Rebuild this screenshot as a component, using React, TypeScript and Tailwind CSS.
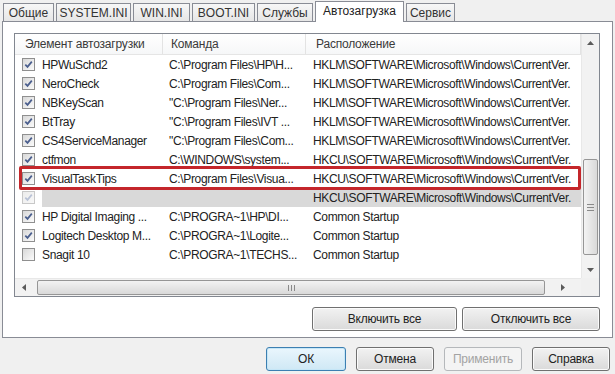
import React from "react";

const font = { fontFamily: '"Liberation Sans", Arial, sans-serif' };

type Row = { name: string; cmd: string; loc: string; on: boolean; ghost?: boolean };

const rows: Row[] = [
  { name: "HPWuSchd2", cmd: "C:\\Program Files\\HP\\H...", loc: "HKLM\\SOFTWARE\\Microsoft\\Windows\\CurrentVer.", on: true },
  { name: "NeroCheck", cmd: "C:\\Program Files\\Com...", loc: "HKLM\\SOFTWARE\\Microsoft\\Windows\\CurrentVer.", on: true },
  { name: "NBKeyScan", cmd: "\"C:\\Program Files\\Ner...", loc: "HKLM\\SOFTWARE\\Microsoft\\Windows\\CurrentVer.", on: true },
  { name: "BtTray", cmd: "\"C:\\Program Files\\IVT ...", loc: "HKLM\\SOFTWARE\\Microsoft\\Windows\\CurrentVer.", on: true },
  { name: "CS4ServiceManager", cmd: "\"C:\\Program Files\\Com...", loc: "HKLM\\SOFTWARE\\Microsoft\\Windows\\CurrentVer.", on: true },
  { name: "ctfmon", cmd: "C:\\WINDOWS\\system...", loc: "HKCU\\SOFTWARE\\Microsoft\\Windows\\CurrentVer.", on: true },
  { name: "VisualTaskTips", cmd: "C:\\Program Files\\Visua...", loc: "HKCU\\SOFTWARE\\Microsoft\\Windows\\CurrentVer.", on: true },
  { name: "", cmd: "", loc: "HKCU\\SOFTWARE\\Microsoft\\Windows\\CurrentVer.", on: true, ghost: true },
  { name: "HP Digital Imaging ...", cmd: "C:\\PROGRA~1\\HP\\DI...", loc: "Common Startup", on: true },
  { name: "Logitech Desktop M...", cmd: "C:\\PROGRA~1\\Logite...", loc: "Common Startup", on: true },
  { name: "Snagit 10", cmd: "C:\\PROGRA~1\\TECHS...", loc: "Common Startup", on: false },
];

const tabs = [
  { label: "Общие", w: "w-[51px]" },
  { label: "SYSTEM.INI", w: "w-[75px]" },
  { label: "WIN.INI", w: "w-[57px]" },
  { label: "BOOT.INI", w: "w-[63px]" },
  { label: "Службы", w: "w-[56px]" },
  { label: "Автозагрузка", w: "w-[89px]", active: true },
  { label: "Сервис", w: "w-[49px]" },
];

function Check({ on, faded }: { on: boolean; faded?: boolean }) {
  return (
    <span
      className={
        "w-[13px] h-[13px] shrink-0 border flex items-center justify-center bg-linear-to-br " +
        (faded ? "border-[#c8c8c8] from-[#ececec] to-[#f8f8f8]" : "border-[#8f8f8f] from-[#d8d8d8] to-[#fbfbfb]")
      }
    >
      {on && (
        <svg width="9" height="9" viewBox="0 0 9 9">
          <path
            d="M1.3 4.6 L3.5 6.9 L7.8 1.6"
            fill="none"
            stroke={faded ? "#b9c2d6" : "#4b5f8e"}
            strokeWidth="1.7"
          />
        </svg>
      )}
    </span>
  );
}

function Btn({ label, w, kind }: { label: string; w: string; kind?: "default" | "disabled" }) {
  const cls =
    kind === "default"
      ? "border-[#3c7fb1] bg-linear-to-b from-[#eaf6fd] to-[#cfe8f5] shadow-[inset_0_0_0_1px_#c5e6f7] text-[#222]"
      : kind === "disabled"
      ? "border-[#b5b8bb] bg-[#f4f4f4] text-[#a3a3a3]"
      : "border-[#707070] bg-linear-to-b from-[#f2f2f2] to-[#dadada] shadow-[inset_0_0_0_1px_#fbfbfb] text-[#222]";
  return (
    <div className={`${w} h-[24px] rounded-[3px] border flex items-center justify-center text-[12px] tracking-[-0.2px] ${cls}`}>
      {label}
    </div>
  );
}

function Arrow({ dir }: { dir: "up" | "down" | "left" | "right" }) {
  const pts = {
    up: "0,4 3.5,0 7,4",
    down: "0,0 3.5,4 7,0",
    left: "4,0 0,3.5 4,7",
    right: "0,0 4,3.5 0,7",
  }[dir];
  const vert = dir === "up" || dir === "down";
  return (
    <svg width={vert ? 7 : 4} height={vert ? 4 : 7} viewBox={vert ? "0 0 7 4" : "0 0 4 7"}>
      <polygon points={pts} fill="#5b5b5b" />
    </svg>
  );
}

export default function App() {
  return (
    <div className="w-[615px] h-[374px] bg-[#f0f0f0] overflow-hidden text-[#222]" style={font}>
      {/* tab strip */}
      <div className="flex items-end h-[21px] pl-[3px] gap-[2px]">
        {tabs.map((t) =>
          t.active ? (
            <div
              key={t.label}
              className={`${t.w} h-[21px] -mb-px relative z-10 border border-b-0 border-[#898c95] bg-white flex items-center justify-center text-[12px] pb-[2px]`}
            >
              {t.label}
            </div>
          ) : (
            <div
              key={t.label}
              className={`${t.w} h-[18px] border border-b-0 border-[#898c95] bg-linear-to-b from-[#f7f7f7] to-[#e6e6e6] flex items-center justify-center text-[12px] text-[#333]`}
            >
              {t.label}
            </div>
          )
        )}
      </div>

      {/* tab panel */}
      <div className="ml-[2px] w-[611px] h-[317px] border border-[#898c95] bg-white pl-[11px] pt-[11px]">
        <div className="relative w-[586px] h-[264px] border border-[#828790] bg-white flex flex-col">
          <div className="flex flex-1 min-h-0">
            <div className="flex-1 flex flex-col">
              {/* header */}
              <div className="flex h-[21px] border-b border-[#e5e5e5] bg-linear-to-b from-white to-[#f6f7f8] text-[12px] text-[#3a3a3a] tracking-[-0.2px]">
                <div className="w-[148px] pl-[10px] flex items-center border-r border-[#e3e3e3]">Элемент автозагрузки</div>
                <div className="w-[143px] pl-[8px] flex items-center border-r border-[#e3e3e3]">Команда</div>
                <div className="w-[275px] pl-[10px] flex items-center border-r border-[#e3e3e3]">Расположение</div>
              </div>
              {/* rows */}
              {rows.map((r, i) => (
                <div key={i} className="flex h-[19px] items-center text-[12px] tracking-[-0.35px] whitespace-nowrap">
                  <div className="w-[148px] pl-[7px] flex items-center gap-[7px] h-full">
                    <Check on={r.on} faded={r.ghost} />
                    <div className={"flex-1 h-full flex items-center " + (r.ghost ? "bg-[#d9d9d9]" : "")}>{r.name}</div>
                  </div>
                  <div className={"w-[143px] pl-[6px] h-full flex items-center " + (r.ghost ? "bg-[#d9d9d9]" : "")}>
                    {r.cmd}
                  </div>
                  <div className={"w-[275px] pl-[7px] h-full flex items-center overflow-hidden " + (r.ghost ? "bg-[#d9d9d9]" : "")}>
                    {r.loc}
                  </div>
                </div>
              ))}
            </div>
            {/* vertical scrollbar */}
            <div className="w-[18px] bg-[#f2f2f2] border-l border-[#e8e8e8] flex flex-col items-center">
              <div className="h-[17px] flex items-center justify-center">
                <Arrow dir="up" />
              </div>
              <div className="flex-1 w-full flex flex-col">
                <div className="h-[108px]" />
                <div className="mx-[1px] h-[96px] rounded-[2px] border border-[#969696] bg-linear-to-r from-[#f3f3f3] to-[#d9d9d9] flex flex-col items-center justify-center gap-[2px]">
                  <span className="w-[7px] h-px bg-[#8a8a8a]" />
                  <span className="w-[7px] h-px bg-[#8a8a8a]" />
                  <span className="w-[7px] h-px bg-[#8a8a8a]" />
                </div>
              </div>
              <div className="h-[17px] flex items-center justify-center">
                <Arrow dir="down" />
              </div>
            </div>
          </div>
          {/* horizontal scrollbar */}
          <div className="flex h-[18px]">
            <div className="flex-1 bg-[#f2f2f2] border-t border-[#e8e8e8] flex items-center">
              <div className="w-[18px] flex justify-center">
                <Arrow dir="left" />
              </div>
              <div className="ml-[4px] w-[508px] h-[15px] rounded-[2px] border border-[#969696] bg-linear-to-b from-[#f3f3f3] to-[#d9d9d9] flex items-center justify-center gap-[2px]">
                <span className="w-px h-[6px] bg-[#8a8a8a]" />
                <span className="w-px h-[6px] bg-[#8a8a8a]" />
                <span className="w-px h-[6px] bg-[#8a8a8a]" />
              </div>
              <div className="flex-1 flex justify-center">
                <Arrow dir="right" />
              </div>
            </div>
            <div className="w-[18px] bg-[#f0f0f0]" />
          </div>

          {/* highlight annotation */}
          <div className="absolute left-[4px] top-[132px] w-[562px] h-[24px] border-[3px] border-[#c4262b] rounded-[2px] pointer-events-none" />
        </div>

        <div className="flex justify-end gap-[5px] pr-[12px] mt-[10px]">
          <Btn label="Включить все" w="w-[145px]" />
          <Btn label="Отключить все" w="w-[138px]" />
        </div>
      </div>

      {/* dialog buttons */}
      <div className="flex justify-end gap-[10px] pr-[5px] mt-[9px]">
        <Btn label="ОК" w="w-[80px]" kind="default" />
        <Btn label="Отмена" w="w-[78px]" />
        <Btn label="Применить" w="w-[78px]" kind="disabled" />
        <Btn label="Справка" w="w-[78px]" />
      </div>
    </div>
  );
}
